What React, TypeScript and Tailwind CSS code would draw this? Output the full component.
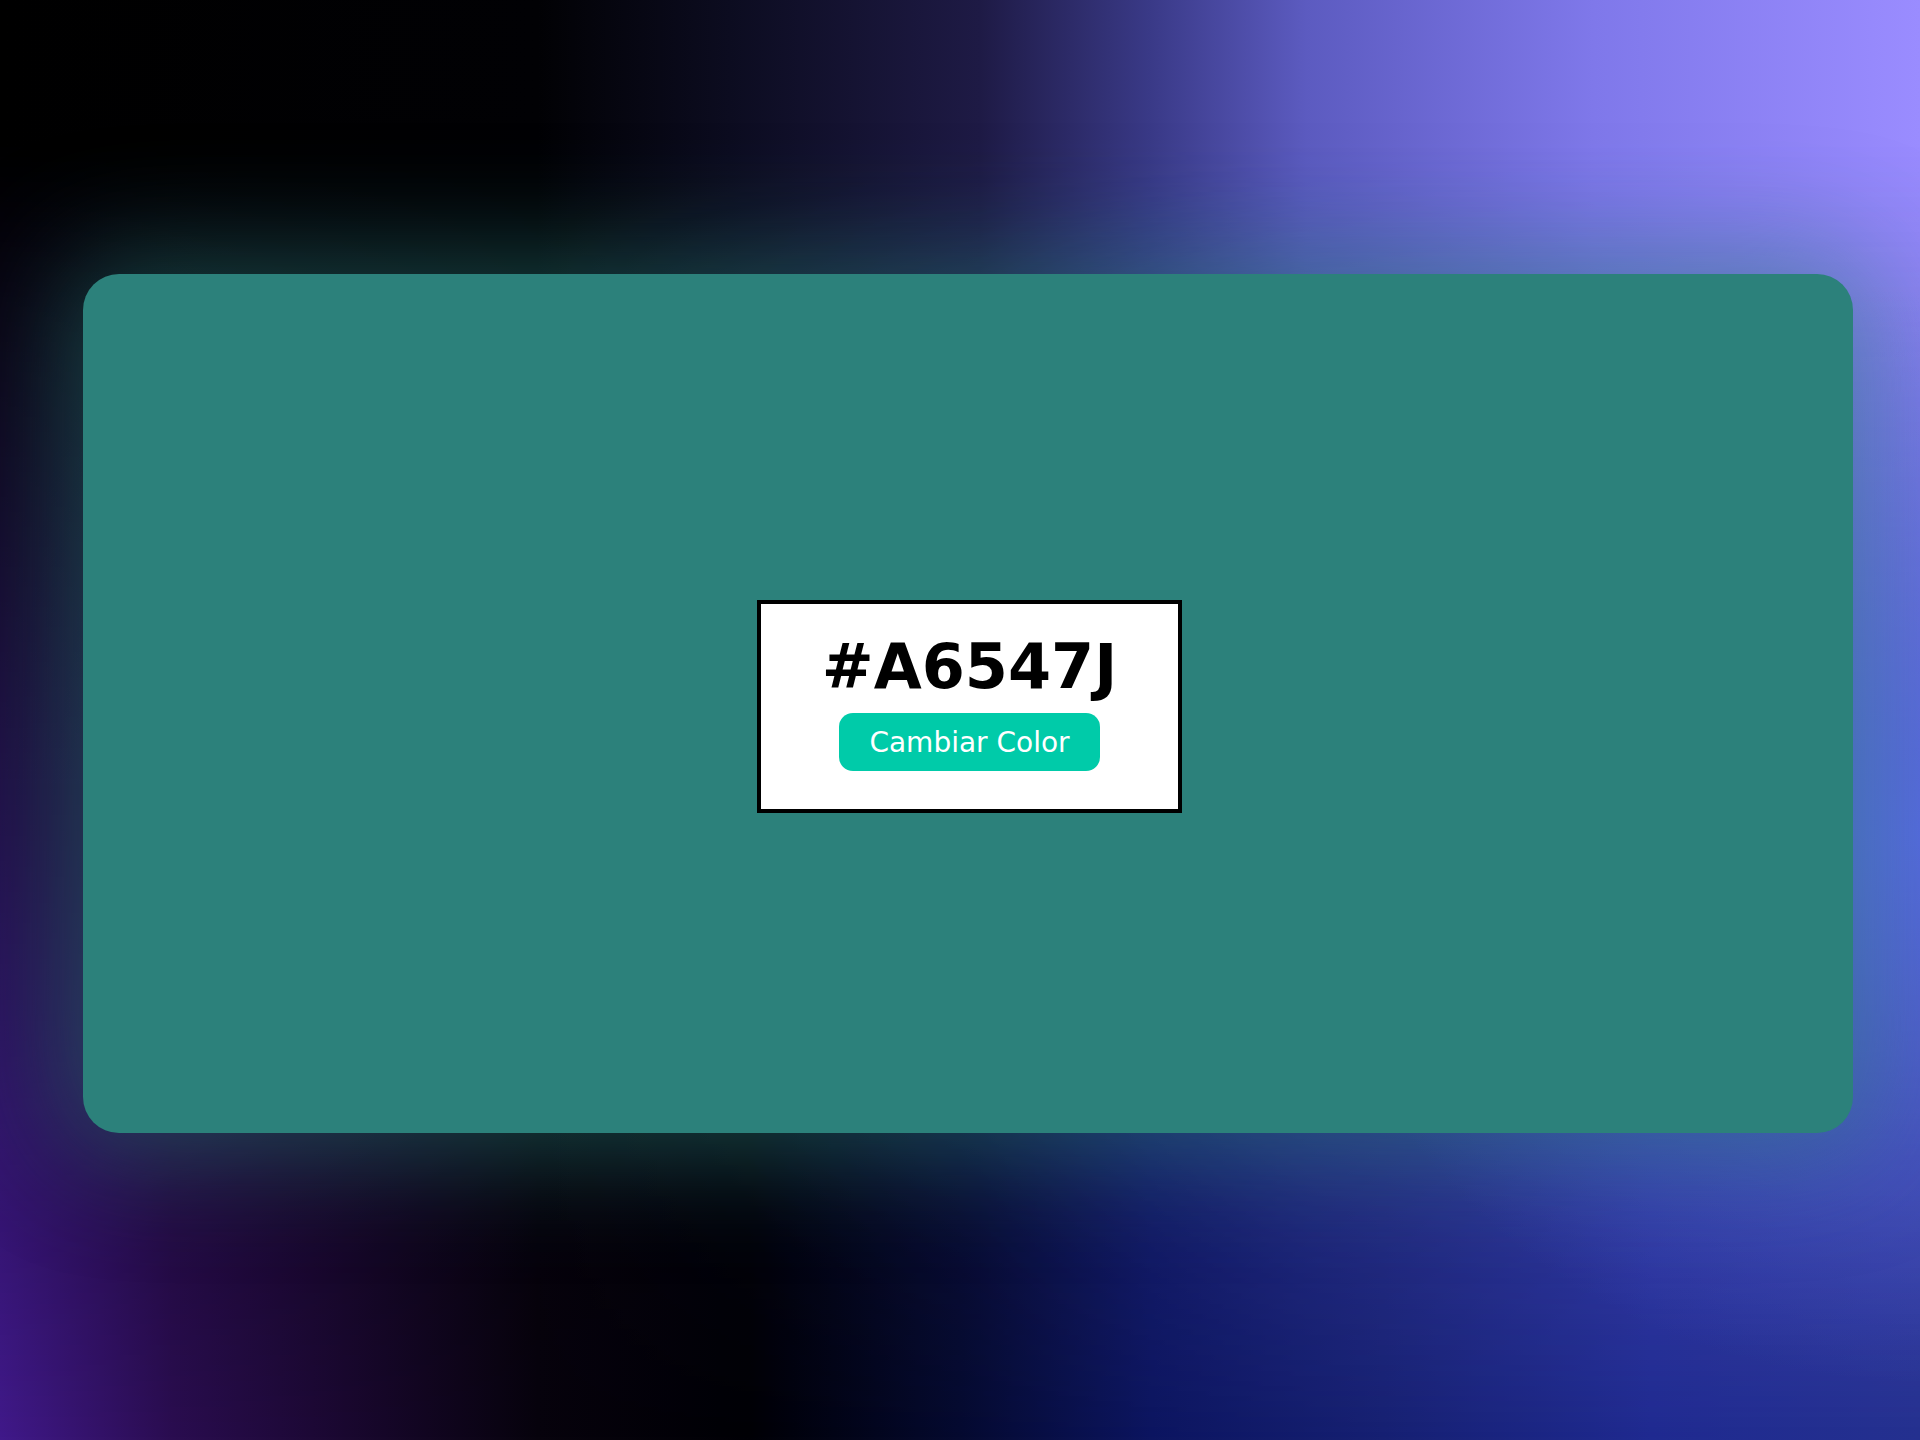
import React from 'react'

const hexCode = '#A6547J'

export default function App() {
  return (
    <div className="relative h-[1440px] w-full overflow-hidden bg-[linear-gradient(to_right,#40198a_0%,#2a0d50_9%,#1a0830_18%,#07030d_28%,#000005_39%,#050a30_50%,#0c1560_60%,#162072_72%,#1f2a90_86%,#24308f_100%)] font-['DejaVu_Sans',sans-serif]">
      <div className="absolute inset-0 bg-[linear-gradient(to_right,#000000_0%,#010104_28%,#0c0c20_38%,#1e1a45_51%,#3a3a88_60%,#5c5bc0_68%,#7f78ea_83%,#9a8cff_100%)] [mask-image:linear-gradient(to_bottom,black_0%,black_10%,rgba(0,0,0,0.55)_50%,transparent_100%)]" />
      <div className="absolute inset-0 bg-[radial-gradient(ellipse_32%_38%_at_100%_58%,rgba(86,108,232,0.8),rgba(86,108,232,0.35)_55%,transparent)]" />
      <div className="relative pl-[83px] pt-[274px]">
        <div className="flex h-[859px] w-[1770px] items-center justify-center rounded-[36px] bg-[#2c817b] shadow-[0_0_110px_20px_rgba(44,129,123,0.5)]">
          <div className="mt-[6px] ml-[3px] flex w-[425px] flex-col items-center border-4 border-black bg-white pt-[27px] pb-[38px]">
            <h1 className="text-[62px] leading-[72px] font-bold text-black">{hexCode}</h1>
            <button
              type="button"
              className="mt-[10px] flex h-[58px] items-center rounded-[14px] bg-[#00cba9] px-[30px] text-[28px] leading-[33px] text-white"
            >
              Cambiar Color
            </button>
          </div>
        </div>
      </div>
    </div>
  )
}
